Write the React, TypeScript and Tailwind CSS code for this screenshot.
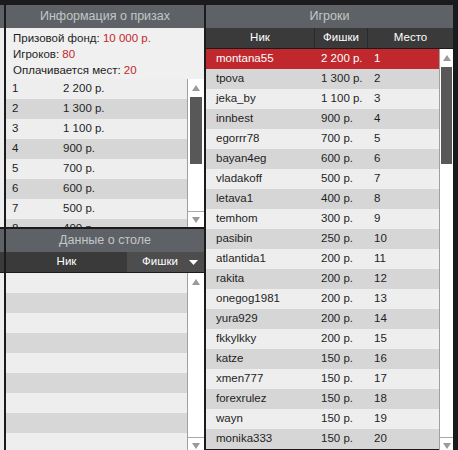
import React from "react";

const prizes = [
  ["1", "2 200 р."],
  ["2", "1 300 р."],
  ["3", "1 100 р."],
  ["4", "900 р."],
  ["5", "700 р."],
  ["6", "600 р."],
  ["7", "500 р."],
  ["8", "400 р."],
];

const players: [string, string, string][] = [
  ["montana55", "2 200 р.", "1"],
  ["tpova", "1 300 р.", "2"],
  ["jeka_by", "1 100 р.", "3"],
  ["innbest", "900 р.", "4"],
  ["egorrr78", "700 р.", "5"],
  ["bayan4eg", "600 р.", "6"],
  ["vladakoff", "500 р.", "7"],
  ["letava1", "400 р.", "8"],
  ["temhom", "300 р.", "9"],
  ["pasibin", "250 р.", "10"],
  ["atlantida1", "200 р.", "11"],
  ["rakita", "200 р.", "12"],
  ["onegog1981", "200 р.", "13"],
  ["yura929", "200 р.", "14"],
  ["fkkylkky", "200 р.", "15"],
  ["katze", "150 р.", "16"],
  ["xmen777", "150 р.", "17"],
  ["forexrulez", "150 р.", "18"],
  ["wayn", "150 р.", "19"],
  ["monika333", "150 р.", "20"],
];

function Up() {
  return (
    <svg width="8" height="6" viewBox="0 0 8 6">
      <polygon points="4,0 8,6 0,6" fill="#9a9a9a" />
    </svg>
  );
}
function Down() {
  return (
    <svg width="8" height="6" viewBox="0 0 8 6">
      <polygon points="0,0 8,0 4,6" fill="#9a9a9a" />
    </svg>
  );
}

function Scrollbar({
  width,
  thumbTop,
  thumbHeight,
  thumbWidth,
  thumbLeft,
}: {
  width: number;
  thumbTop: number;
  thumbHeight: number;
  thumbWidth: number;
  thumbLeft: number;
}) {
  return (
    <div
      className="flex flex-col bg-white border-l border-[#a0a0a0] shrink-0 h-full"
      style={{ width }}
    >
      <div className="h-[17px] flex items-center justify-center shrink-0">
        <Up />
      </div>
      <div className="flex-1 min-h-0">
        {thumbHeight > 0 && (
          <div
            className="bg-[#585858]"
            style={{ marginTop: thumbTop, height: thumbHeight, width: thumbWidth, marginLeft: thumbLeft }}
          />
        )}
      </div>
      <div className="h-[16px] border-t border-[#a8a8a8] flex items-center justify-center shrink-0">
        <Down />
      </div>
    </div>
  );
}

function Title({ children }: { children: React.ReactNode }) {
  return (
    <div className="h-[23px] bg-[#5e6266] flex items-center justify-center text-[12.5px] text-[#c3c6c9] shrink-0">
      {children}
    </div>
  );
}

export default function App() {
  return (
    <div
      className="w-[458px] h-[450px] bg-[#1b1b1e] overflow-hidden pt-[5px] flex text-[11px] text-[#1e1e1e]"
      style={{ fontFamily: '"Liberation Sans", Arial, sans-serif' }}
    >
      {/* stub */}
      <div className="w-[4px] flex flex-col shrink-0">
        <div className="h-[23px] bg-[#5e6266]" />
        <div className="h-[199px] bg-[#eeeeee]" />
        <div className="h-[2px]" />
        <div className="h-[23px] bg-[#5e6266]" />
        <div className="h-[20px] bg-[#3a3a3a]" />
        <div className="h-[1px]" />
        <div className="flex-1 bg-[#eeeeee]" />
      </div>

      {/* left panel */}
      <div className="w-[198px] ml-[2px] flex flex-col shrink-0">
        <Title>Информация о призах</Title>
        <div className="bg-[#f0f0f0] pt-[2px] pb-[1px] pl-[7px] leading-[16px] text-[11.5px] shrink-0">
          <div>
            Призовой фонд: <span className="text-[#c0282d]">10 000 р.</span>
          </div>
          <div>
            Игроков: <span className="text-[#c0282d]">80</span>
          </div>
          <div>
            Оплачивается мест: <span className="text-[#c0282d]">20</span>
          </div>
        </div>
        <div className="h-[148px] flex overflow-hidden shrink-0">
          <div className="flex-1 flex flex-col overflow-hidden">
            {prizes.map((p, i) => (
              <div
                key={i}
                className={`h-[20px] shrink-0 flex items-center text-[11.5px] ${i % 2 === 0 ? "bg-[#eeeeee]" : "bg-[#d6d6d6]"}`}
              >
                <div className="w-[57px] pl-[6px]">{p[0]}</div>
                <div>{p[1]}</div>
              </div>
            ))}
          </div>
          <Scrollbar width={17} thumbTop={1} thumbHeight={67} thumbWidth={12} thumbLeft={2} />
        </div>
        <div className="h-[2px] shrink-0" />
        <Title>Данные о столе</Title>
        <div className="h-[20px] bg-[#3a3a3a] flex text-white text-[11.5px] shrink-0">
          <div className="w-[121px] flex items-center justify-center">Ник</div>
          <div className="flex-1 bg-[#4d4d4d] flex items-center pl-[15px] relative">
            Фишки
            <svg className="absolute right-[6px] top-[8px]" width="9" height="5" viewBox="0 0 9 5">
              <polygon points="0,0 9,0 4.5,5" fill="#ffffff" />
            </svg>
          </div>
        </div>
        <div className="h-[1px] shrink-0" />
        <div className="flex-1 flex overflow-hidden min-h-0">
          <div className="flex-1 flex flex-col overflow-hidden">
            {Array.from({ length: 10 }).map((_, i) => (
              <div key={i} className={`h-[20px] shrink-0 ${i % 2 === 0 ? "bg-[#eeeeee]" : "bg-[#d7d7d7]"}`} />
            ))}
          </div>
          <div className="h-[180px] flex">
            <Scrollbar width={17} thumbTop={0} thumbHeight={0} thumbWidth={12} thumbLeft={2} />
          </div>
        </div>
      </div>

      {/* right panel */}
      <div className="w-[247px] ml-[2px] flex flex-col shrink-0">
        <Title>Игроки</Title>
        <div className="h-[20px] bg-[#3a3a3a] flex text-white text-[11.5px] shrink-0">
          <div className="w-[108px] flex items-center justify-center">Ник</div>
          <div className="w-[53px] border-l border-[#2a2a2a] flex items-center justify-center">Фишки</div>
          <div className="flex-1 border-l border-[#2a2a2a] flex items-center justify-center">Место</div>
        </div>
        <div className="h-[1px] shrink-0" />
        <div className="flex-1 flex overflow-hidden min-h-0">
          <div className="flex-1 flex flex-col overflow-hidden">
            {players.map((p, i) => (
              <div
                key={i}
                className={`h-[20px] shrink-0 flex items-center text-[11.5px] ${
                  i === 0 ? "bg-[#c0282d] text-white" : i % 2 === 1 ? "bg-[#d6d6d6]" : "bg-[#eeeeee]"
                }`}
              >
                <div className="w-[108px] pl-[10px]">{p[0]}</div>
                <div className="w-[53px] pl-[7px]">{p[1]}</div>
                <div className="pl-[7px]">{p[2]}</div>
              </div>
            ))}
          </div>
          <div className="h-[404px] flex">
            <Scrollbar width={14} thumbTop={1} thumbHeight={97} thumbWidth={11} thumbLeft={1} />
          </div>
        </div>
      </div>
    </div>
  );
}
